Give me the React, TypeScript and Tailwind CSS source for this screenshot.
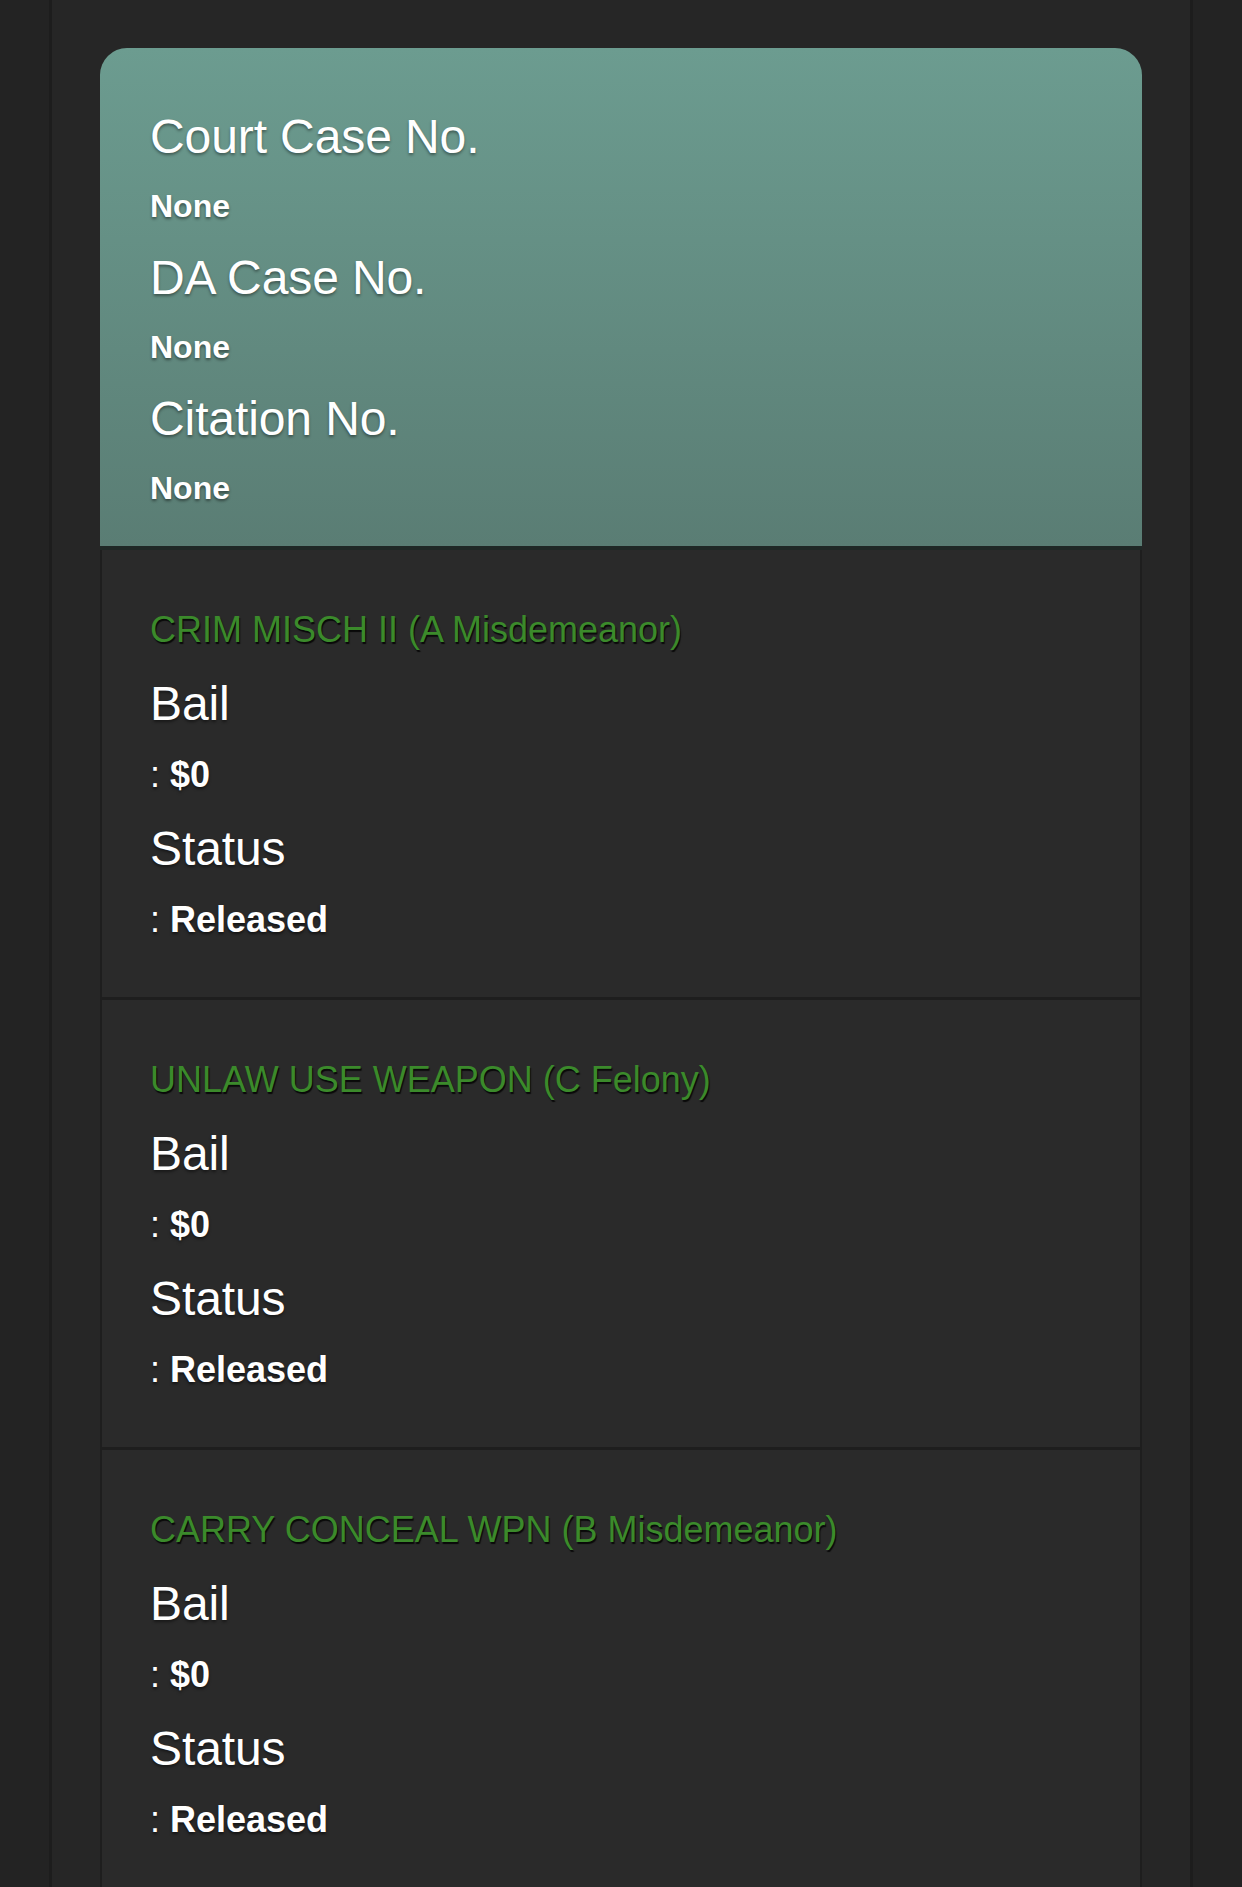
import React from 'react';

const cases = [
  { label: 'Court Case No.', value: 'None' },
  { label: 'DA Case No.', value: 'None' },
  { label: 'Citation No.', value: 'None' },
];

const charges = [
  { name: 'CRIM MISCH II (A Misdemeanor)', bail: '$0', status: 'Released' },
  { name: 'UNLAW USE WEAPON (C Felony)', bail: '$0', status: 'Released' },
  { name: 'CARRY CONCEAL WPN (B Misdemeanor)', bail: '$0', status: 'Released' },
];

function Field({ label, value }: { label: string; value: string }) {
  return (
    <div className="mt-[24px] first:mt-0">
      <h3 className="text-[48px] leading-[56px] font-normal tracking-[-0.1px] text-white [text-shadow:0_2px_3px_rgba(0,0,0,0.45)]">
        {label}
      </h3>
      <p className="mt-[21px] text-[36px] leading-[44px] text-white [text-shadow:0_2px_3px_rgba(0,0,0,0.55)]">
        : <span className="font-bold">{value}</span>
      </p>
    </div>
  );
}

function ChargeRow({ charge }: { charge: (typeof charges)[number] }) {
  return (
    <div className="border-x-2 border-b-[3px] border-[#1e1e1e] bg-[#2a2a2a] px-[48px] pt-[58px] pb-[55px]">
      <h4 className="text-[36px] leading-[44px] text-[#3b8a2b] [text-shadow:1px_2px_1px_rgba(0,0,0,0.8)]">
        {charge.name}
      </h4>
      <div className="mt-[24px]">
        <Field label="Bail" value={charge.bail} />
        <Field label="Status" value={charge.status} />
      </div>
    </div>
  );
}

export default function App() {
  return (
    <div
      className="h-[1887px] overflow-hidden bg-[#232323]"
      style={{ fontFamily: '"Liberation Sans", Arial, sans-serif' }}
    >
      <div className="mx-auto h-full w-[1144px] border-x-[3px] border-[#1d1d1d] bg-[#262626] px-[48px] pt-[48px]">
        <div className="overflow-hidden rounded-t-[27px]">
          <div className="border-b-4 border-[#1f2826] bg-gradient-to-b from-[#6c9c90] to-[#5a7d74] px-[50px] pt-[61px] pb-[38px]">
            {cases.map(c => (
              <div key={c.label} className="mt-[24px] first:mt-0">
                <h3 className="text-[48px] leading-[56px] tracking-[-0.1px] text-white [text-shadow:0_2px_3px_rgba(0,0,0,0.4)]">
                  {c.label}
                </h3>
                <p className="mt-[21px] text-[32px] leading-[40px] font-bold text-white [text-shadow:0_2px_3px_rgba(0,0,0,0.45)]">
                  {c.value}
                </p>
              </div>
            ))}
          </div>
          {charges.map(ch => (
            <ChargeRow key={ch.name} charge={ch} />
          ))}
        </div>
      </div>
    </div>
  );
}
